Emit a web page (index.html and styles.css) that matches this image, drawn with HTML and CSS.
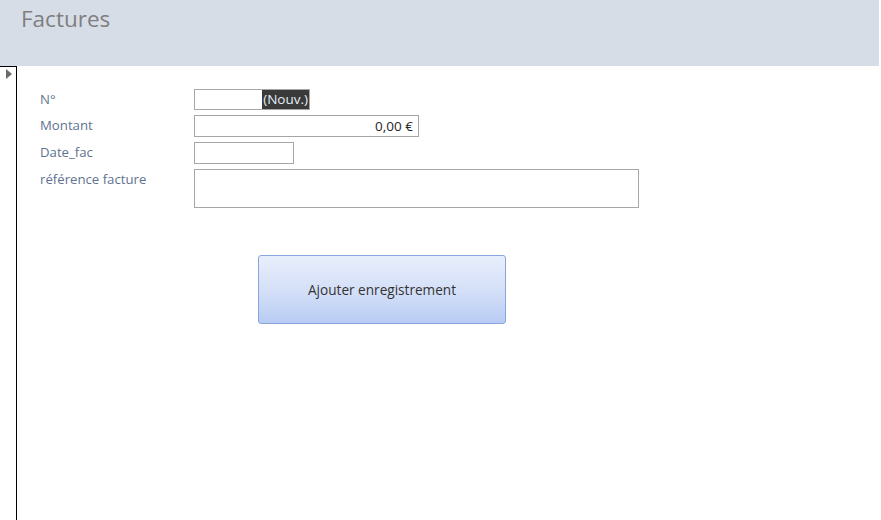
FILE: index.html
```html
<!DOCTYPE html>
<html lang="fr">
<head>
<meta charset="utf-8">
<title>Factures</title>
<link rel="stylesheet" href="styles.css">
</head>
<body>
<header class="form-header">
  <h1 class="form-title">Factures</h1>
</header>
<div class="form-body">
  <div class="record-selector">
    <svg class="record-arrow" width="6" height="10" viewBox="0 0 6 10"><polygon points="0,0 6,5 0,10" fill="#6a6a6a"/></svg>
  </div>
  <main class="detail">
    <div class="fields">
      <div class="row">
        <label class="lbl">N°</label>
        <div class="field f-num"><span class="sel">(Nouv.)</span></div>
      </div>
      <div class="row">
        <label class="lbl">Montant</label>
        <div class="field f-amount"><span class="val">0,00 €</span></div>
      </div>
      <div class="row">
        <label class="lbl">Date_fac</label>
        <div class="field f-date"></div>
      </div>
      <div class="row">
        <label class="lbl">référence facture</label>
        <div class="field f-ref"></div>
      </div>
    </div>
    <button class="add-btn" type="button">Ajouter enregistrement</button>
  </main>
</div>
</body>
</html>
```
FILE: styles.css
```css
html, body {
  margin: 0;
  padding: 0;
  background: #ffffff;
  font-family: "Open Sans", "Noto Sans", sans-serif;
}
body {
  width: 881px;
  height: 520px;
  overflow: hidden;
  display: flex;
  flex-direction: column;
}
.form-header {
  height: 66px;
  width: 879px;
  background: #d6dde7;
  box-sizing: border-box;
  padding: 4px 0 0 21px;
}
.form-title {
  margin: 0;
  font-weight: normal;
  font-size: 22.5px;
  line-height: 30px;
  color: #7f7f7f;
}
.form-body {
  flex: 1;
  display: flex;
}
.record-selector {
  width: 17px;
  border-top: 1px solid #000;
  border-right: 1px solid #000;
  padding: 2px 0 0 6px;
  box-sizing: border-box;
}
.record-arrow {
  display: block;
}
.detail {
  flex: 1;
  padding: 23px 0 0 23px;
  display: flex;
  flex-direction: column;
  align-items: flex-start;
}
.fields {
  display: flex;
  flex-direction: column;
  gap: 5px;
}
.row {
  display: flex;
  align-items: flex-start;
}
.lbl {
  width: 154px;
  font-size: 13.2px;
  line-height: 18px;
  padding-top: 1px;
  color: #5f7391;
}
.field {
  height: 21px;
  box-sizing: border-box;
  border: 1px solid #a6a6a6;
  background: #fff;
  display: flex;
  justify-content: flex-end;
  font-size: 13.5px;
  color: #262626;
}
.f-num { width: 116px; }
.f-amount { width: 225px; height: 22px; }
.f-date { width: 100px; height: 22px; }
.f-ref { width: 445px; height: 39px; }
.sel {
  background: #3a3a3a;
  color: #e6edf7;
  line-height: 19px;
  padding: 0 1px;
}
.val {
  line-height: 20px;
  padding-right: 5px;
}
.add-btn {
  margin: 47px 0 0 218px;
  width: 248px;
  height: 69px;
  border: 1px solid #88a5dd;
  border-radius: 3px;
  background: linear-gradient(to bottom, #e8eefb 0%, #d3dff8 55%, #b8cbf3 100%);
  font-family: "Open Sans", "Noto Sans", sans-serif;
  font-size: 13.6px;
  color: #333333;
  padding: 0;
}
```
